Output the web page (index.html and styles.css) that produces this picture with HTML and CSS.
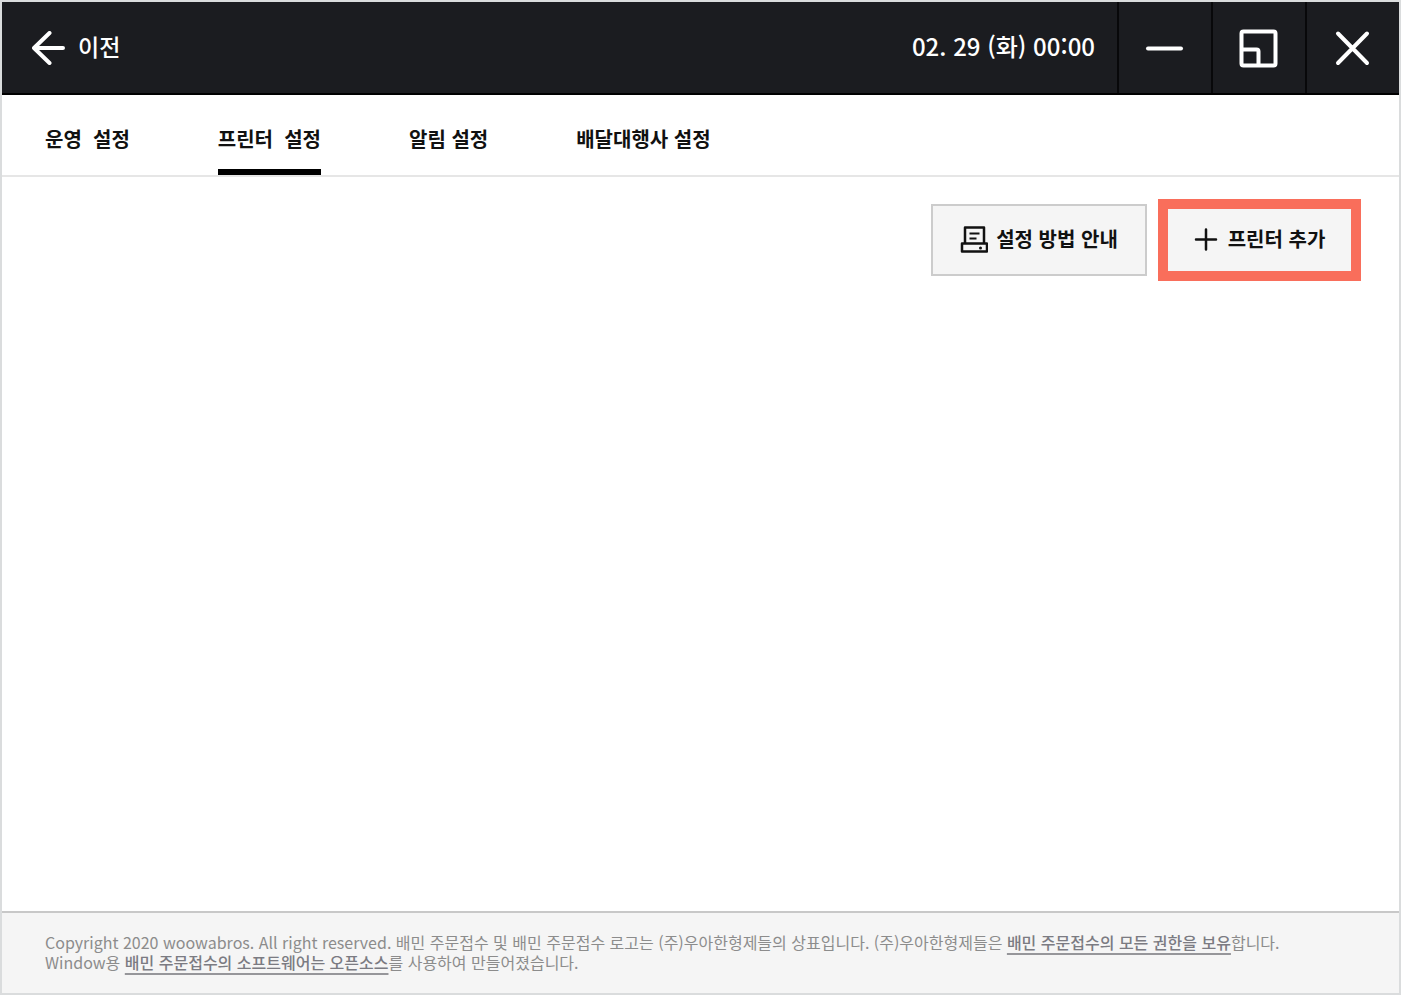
FILE: index.html
```html
<!DOCTYPE html>
<html lang="ko">
<head>
    <meta charset="UTF-8">
    <meta name="viewport" content="width=device-width, initial-scale=1.0">
    <title>프린터 설정</title>
    <link rel="stylesheet" href="styles.css">
</head>
<body>
    <header class="topbar">
        <button type="button" class="back">
            <svg width="34" height="34" viewBox="0 0 34 34" fill="none" stroke="currentColor" stroke-width="4" stroke-linecap="round" stroke-linejoin="round" aria-hidden="true">
                <path d="M17.500 2L2 17L17.500 32M2 17H31"/>
            </svg>
            <span class="label">이전</span>
        </button>
        <time class="clock label">02. 29 (화) 00:00</time>
        <div class="window-buttons">
            <button type="button" aria-label="최소화">
                <svg width="40" height="40" viewBox="0 0 40 40" fill="none" stroke="currentColor" stroke-width="4" stroke-linecap="round" aria-hidden="true">
                    <path d="M3 20.500H36"/>
                </svg>
            </button>
            <button type="button" aria-label="창 크기 변경">
                <svg width="40" height="40" viewBox="0 0 40 40" fill="none" stroke="currentColor" stroke-width="4" stroke-linejoin="round" aria-hidden="true">
                    <rect x="2.500" y="3.500" width="34" height="34" rx="2"/>
                    <path d="M3 21.500H17.500Q19.500 21.500 19.500 23.500V37"/>
                </svg>
            </button>
            <button type="button" aria-label="닫기">
                <svg width="40" height="40" viewBox="0 0 40 40" fill="none" stroke="currentColor" stroke-width="4" stroke-linecap="round" aria-hidden="true">
                    <path d="M5 5.500L34 35M34 5.500L5 35"/>
                </svg>
            </button>
        </div>
    </header>

    <nav class="tabs">
        <a href="#">운영&nbsp; 설정</a>
        <a href="#" class="active" aria-current="page">프린터&nbsp; 설정</a>
        <a href="#">알림 설정</a>
        <a href="#">배달대행사 설정</a>
    </nav>

    <main>
        <div class="actions">
            <button type="button" class="guide">
                <svg width="28" height="28" viewBox="0 0 28 28" fill="none" stroke="currentColor" stroke-width="2.500" stroke-linejoin="round" aria-hidden="true">
                    <path d="M5 17V1.500H24V17"/>
                    <rect x="2" y="17.500" width="25" height="8"/>
                    <path d="M9.500 7.500H19.500M9.500 12.500H16.500" stroke-width="2"/>
                    <circle cx="20.500" cy="22" r="1.500" fill="currentColor" stroke="none"/>
                </svg>
                <span class="label">설정 방법 안내</span>
            </button>
            <button type="button" class="add">
                <svg width="24" height="24" viewBox="0 0 24 24" fill="none" stroke="currentColor" stroke-width="2.500" stroke-linecap="round" aria-hidden="true">
                    <path d="M12 1.500V21.500M2 11.500H22"/>
                </svg>
                <span class="label">프린터 추가</span>
            </button>
        </div>
    </main>

    <footer>
        Copyright 2020 woowabros. All right reserved. 배민 주문접수 및 배민 주문접수 로고는 (주)우아한형제들의 상표입니다. (주)우아한형제들은 <a href="#">배민 주문접수의 모든 권한을 보유</a>합니다.<br>
        Window용 <a href="#">배민 주문접수의 소프트웨어는 오픈소스</a>를 사용하여 만들어졌습니다.
    </footer>
</body>
</html>
```
FILE: styles.css
```css
* {
    box-sizing: border-box;
}
body {
    font-family: "Noto Sans CJK KR", sans-serif;
    margin: 0;
    min-height: 100vh;
    display: flex;
    flex-direction: column;
    background-color: #fff;
    color: #111;
    border: 2px solid #dadcdd;
}
button {
    font-family: inherit;
    cursor: pointer;
}
svg {
    display: block;
    flex-shrink: 0;
}
.label {
    padding-bottom: 4px;
}
.topbar {
    display: flex;
    align-items: stretch;
    height: 93px;
    background-color: #1b1c20;
    border-bottom: 2px solid #000;
    color: #fff;
}
.back {
    display: flex;
    align-items: center;
    gap: 12px;
    padding: 0 30px;
    background: none;
    border: none;
    color: #fff;
    font-size: 23px;
    font-weight: 500;
}
.clock {
    margin-left: auto;
    margin-right: 22px;
    align-self: center;
    font-size: 24px;
    line-height: 32px;
    font-weight: 500;
}
.window-buttons {
    display: flex;
}
.window-buttons button {
    display: flex;
    align-items: center;
    justify-content: center;
    width: 94px;
    padding: 0;
    background: none;
    border: none;
    border-left: 2px solid #08080a;
    color: #fff;
}
.tabs {
    display: flex;
    gap: 88px;
    height: 82px;
    padding: 0 43px;
    border-bottom: 2px solid #e6e6e6;
}
.tabs a {
    display: flex;
    align-items: center;
    padding-top: 12px;
    border-bottom: 6px solid transparent;
    color: #111;
    font-size: 20px;
    font-weight: 700;
    text-decoration: none;
}
.tabs .active {
    border-bottom-color: #000;
}
main {
    flex: 1;
    padding: 22px 38px;
}
.actions {
    display: flex;
    justify-content: flex-end;
    align-items: center;
    gap: 11px;
}
.actions button {
    display: flex;
    align-items: center;
    justify-content: center;
    gap: 8px;
    background-color: #f5f5f5;
    color: #111;
    font-size: 20px;
    font-weight: 700;
}
.guide {
    width: 216px;
    height: 72px;
    border: 2px solid #ccc;
}
.actions .add {
    width: 203px;
    height: 82px;
    border: 10px solid #f96e5b;
    gap: 10px;
}
footer {
    padding: 19px 43px 21px;
    background-color: #f5f5f5;
    border-top: 2px solid #c8c8c8;
    color: #8c8c8c;
    font-size: 16px;
    line-height: 20px;
}
footer a {
    color: #7b7b82;
    font-weight: 500;
    text-decoration: underline #96969a;
    text-decoration-thickness: 2px;
    text-underline-offset: 4px;
    text-decoration-skip-ink: none;
}
```
